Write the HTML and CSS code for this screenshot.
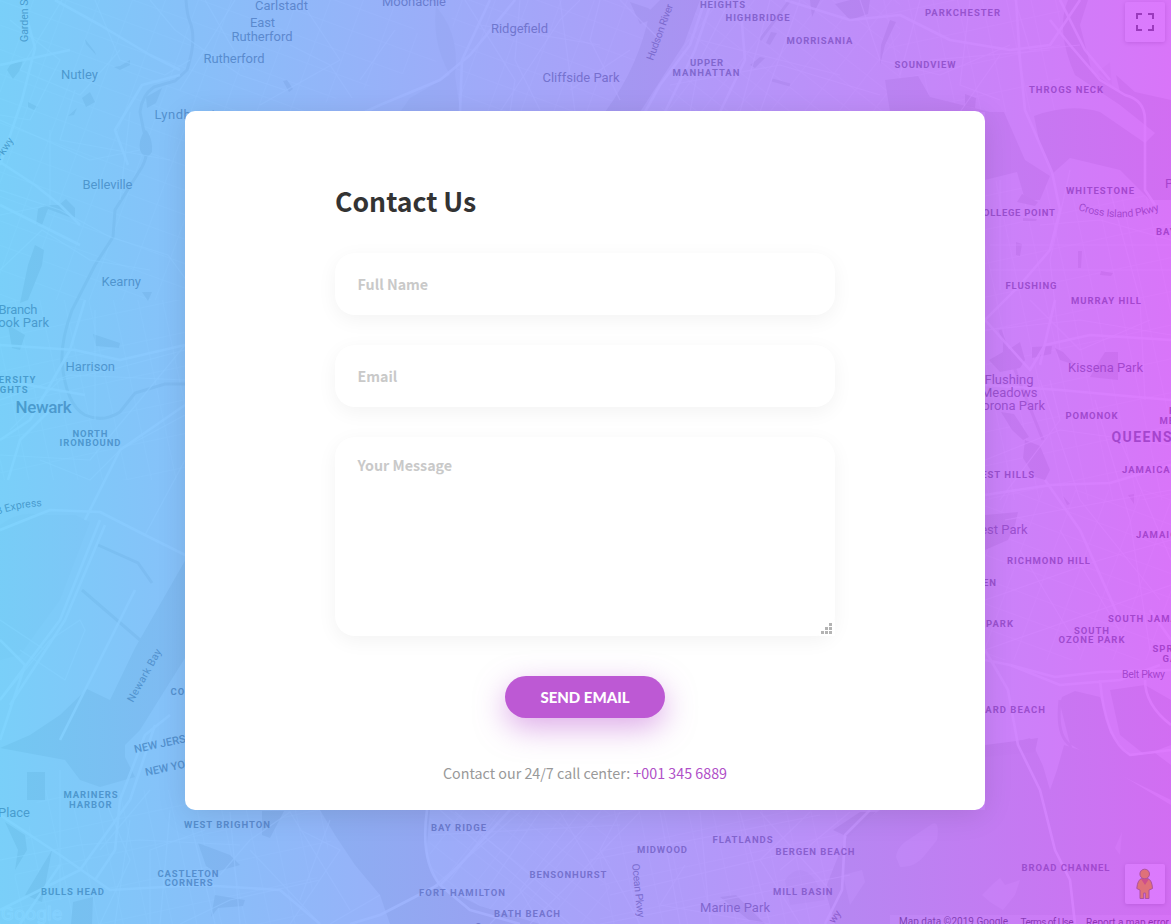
FILE: index.html
```html
<!DOCTYPE html>
<html lang="en">
<head>
<meta charset="utf-8">
<title>Contact Us</title>
<link rel="stylesheet" href="styles.css">
</head>
<body>
<div class="page">
  <svg class="map" viewBox="0 0 1171 924" width="1171" height="924" aria-hidden="true">
    <defs>
      <linearGradient id="tint" x1="0" x2="1" y1="0" y2="0">
        <stop offset="0" stop-color="#49c3ff"/>
        <stop offset=".16" stop-color="#5caeff"/>
        <stop offset="1" stop-color="#d142ff"/>
      </linearGradient>
      <pattern id="gridA" width="31" height="23" patternUnits="userSpaceOnUse" patternTransform="rotate(20)"><path d="M0 .5H31M.5 0V23"/></pattern>
      <pattern id="gridB" width="24" height="33" patternUnits="userSpaceOnUse" patternTransform="rotate(-12)"><path d="M0 .5H24M.5 0V33"/></pattern>
      <pattern id="gridC" width="27" height="19" patternUnits="userSpaceOnUse" patternTransform="rotate(38)"><path d="M0 .5H27M.5 0V19"/></pattern>
      <path id="crossIsland" d="M1078 210Q1122 225 1163 209"/>
      <path id="express" d="M-8 517Q16 507 44 506"/>
    </defs>
    <rect class="land" width="1171" height="924"/>

    <g class="streets">
      <path fill="url(#gridA)" d="M0 0H190V300H0Z"/>
      <path fill="url(#gridB)" d="M0 300H190V480H0Z"/>
      <path fill="url(#gridA)" d="M190 0L390 0 440 60 300 112 190 112Z"/>
      <path fill="url(#gridA)" d="M450 0H670L640 112H460Z"/>
      <path fill="url(#gridC)" d="M700 0H900V112H660Z"/>
      <path fill="url(#gridB)" d="M880 0H1060V112H900Z"/>
      <path fill="url(#gridB)" d="M985 180L1171 190V500H985Z"/>
      <path fill="url(#gridA)" d="M985 490H1171V660H985Z"/>
      <path fill="url(#gridB)" d="M40 790H350L300 924H0Z"/>
      <path fill="url(#gridC)" d="M430 810H610V924H480L430 870Z"/>
      <path fill="url(#gridB)" d="M600 810H840L830 924H600Z"/>
    </g>

    <g class="water">
      <path d="M430 0Q461 30 455 75L460 112H400L410 98 450 75Q430 40 437 0Z" opacity=".5"/>
      <path d="M660 0H700L684 44 640 112H605Q640 65 650 10Z"/>
      <path d="M1088 0L1080 25 1092 72 1120 92 1116 75 1135 92 1171 100V200H1150L1120 170 1070 158 1052 174 1040 145 1034 116Q1070 103 1100 112L1145 143 1155 133 1120 105 1075 75Q1055 30 1068 0Z"/>
      <path d="M885 80L918 76 930 97 990 112H1004L1025 160 1050 176 1040 200H1025L1017 172 985 180V112H890Z"/>
      <path d="M0 525Q20 510 40 515H75L90 522 60 600 20 655 0 660Z" opacity=".3"/>
      <path d="M87 689L110 700 135 648 190 552V650L140 730 125 745V757L135 777 100 787 80 780 65 760 0 748 30 735 60 715Z"/>
      <path d="M985 750L1030 738 1043 766 1050 790 1057 770 1064 745 1080 750 1171 805V924H835L825 890Q840 850 850 830L880 810H985Z"/>
      <path d="M1060 704L1062 697 1075 691 1100 697 1105 713 1110 733 1130 756 1155 753 1171 765V800L1120 775 1070 744Z"/>
      <path d="M1110 690L1145 685 1171 700V745L1145 755 1120 735Z"/>
      <path d="M320 810H430L426 855 438 885 480 906 540 924H390L380 895 355 865 335 835Z"/>
      <path d="M630 2L648 8 658 17 640 24Z"/>
    </g>

    <g class="creek">
      <path d="M186 0Q187 15 190 22Q197 40 187 70L175 81 154 87Q142 95 140 112L144 132Q151 150 142 167L115 210 113 237 95 265 72 310Q61 340 62 362Q66 405 85 415Q103 423 120 412L135 393 165 384H185"/>
      <path d="M760 40L790 0M772 80L790 85M1000 330L1022 388 1043 440"/>
      <path d="M1060 700Q1056 735 1070 745L1080 790"/>
      <path d="M98 545L138 563 152 583M82 590L140 640"/>
    </g>

    <g class="parks">
      <path d="M145 130Q138 140 140 150Q145 162 152 152Q153 140 147 131Z"/>
      <path d="M146 97L162 88 156 103 147 108Z"/>
      <path d="M59 205L66 199 75 208 75 219 48 209 42 225 36 225 38 209 45 205Z"/>
      <path d="M35 245L44 250 42 265 28 300 20 303 28 265Z"/>
      <path d="M10 65L23 60 20 70 13 79 7 70Z"/><path d="M82 98L90 92 95 102 86 107Z"/>
      <path d="M28 102L38 107 34 110 28 107ZM68 116L77 108 74 115ZM114 67L120 66 130 60 130 65 120 70Z"/>
      <path d="M85 39L95 52 96 55 86 44Z"/><path d="M142 292L152 292 148 301Z"/>
      <path d="M93 334L120 343 119 348 96 346Z"/><path d="M8 325L25 335 20 350 12 348Z"/>
      <path d="M283 81L287 80 293 89 289 92Z"/>
      <path d="M27 772H45V800H27Z"/><path d="M52 850L25 895 42 902Z"/><path d="M73 902L93 897 92 924H71Z"/>
      <path d="M198 843L230 855 240 865 215 872 206 866Z"/><path d="M262 811H284L270 838 262 835Z"/>
      <path d="M5 822L25 835 27 850 15 870 18 850Z"/><path d="M215 895L245 900 243 906 218 908 211 917Z"/>
      <path d="M720 897L736 895 765 924 750 921Z"/>
      <path d="M890 20L896 22 885 45 880 65 881 45Z"/><path d="M965 94L976 98 975 108 965 106Z"/>
      <path d="M810 0H820L812 17ZM835 4L850 0H870L868 14 850 20Z"/>
      <path d="M989 360L1003 352 1003 342 1008 350 1020 342 1025 360 1020 368 1000 372Z"/>
      <path d="M1032 347L1052 346 1051 354 1032 358ZM1055 348L1063 352 1075 365 1060 360ZM1100 360L1105 352H1118V380L1090 377Z"/>
      <path d="M1001 412L1014 414 1029 437 1023 440 1012 430Z"/>
      <path d="M1025 440L1040 446 1050 470 1045 480 1035 477 1023 458Z"/>
      <path d="M985 515L1018 512 1015 525 1008 540 985 550Z"/>
      <path d="M1016 242L1022 244 1020 256 1016 255ZM1078 251L1082 251 1081 268H1078ZM1101 271L1113 273 1111 276 1100 275Z"/>
      <path d="M1017 202L1022 194 1038 202 1035 206ZM1023 218L1037 219 1036 221 1023 221Z"/>
      <path d="M1063 496L1070 504 1067 505ZM1128 495L1134 494 1134 504Z"/>
      <path d="M785 880Q800 860 815 880L825 900 790 905Z" opacity=".4"/>
      <path d="M833 830L860 812H876L848 837Z"/>
      <path d="M771 32L766 43 770 45 777 33ZM760 57L750 65 755 68 765 58Z"/>
      <path d="M985 745L1038 738 1035 752 985 757Z"/>
    </g>

    <g class="isles">
      <path d="M896 857Q897 848 905 842L932 824Q940 820 937 840L925 855Q915 868 900 867Z"/>
      <path d="M982 895L993 884 1000 878 1005 885 1020 880 1015 895 1003 910 990 902Z"/>
      <path d="M1115 848L1122 832 1120 855Z"/><path d="M1098 72L1110 62 1112 85Z"/>
      <path d="M843 875L862 870 865 882 850 905Z"/>
    </g>

    <g class="roads minor">
      <path d="M0 120L90 160 140 150M0 190L60 210 110 237 168 255 190 285M50 130V205L0 215M95 0L120 60 165 75 190 60M0 270L42 230 90 260 150 270"/>
      <path d="M62 0L20 70 80 95 120 50M150 0L175 30 240 75 285 90M205 0L245 70M235 0L180 90M300 0L340 60 260 105M290 45L330 65 352 98M360 80L395 30M75 90L60 140 170 160M130 112L120 200"/>
      <path d="M0 455L90 460 140 400 185 345M10 430L60 380 110 370 185 350M95 310V420M0 400L70 375 185 380M40 460L90 480 120 450 185 415M145 535L185 460"/>
      <path d="M0 700L50 640 80 620 85 630 65 680 20 650M0 620L45 650M60 770V900M0 860L80 845 140 840 240 845M105 800L130 860 100 924M190 820L215 924M150 790L100 850"/>
      <path d="M220 875L250 840 290 812 350 910M300 830L340 850 290 924M330 820L300 900M250 850L320 924M380 895L330 924M180 924L230 900 320 880"/>
      <path d="M520 0L515 60 540 110M500 112L560 20 580 0M600 0L590 40 620 100M560 0L575 112M620 0L660 40M465 0L515 80 510 112M630 50L570 90M480 25L600 45"/>
      <path d="M730 0L700 60 690 112M770 0L740 112M800 0L760 112M670 85L780 65 880 95M700 40L840 75M860 0L880 60 940 75 1010 45M920 0L900 75M970 0L960 85 1000 100M1000 55L960 112M930 60L1050 50M1015 0L1030 50 1080 45"/>
      <path d="M990 245H1171M990 270H1171M1000 180V290M1070 170L1050 260 1060 350M1110 190L1140 300 1145 400M1040 225L1100 220 1171 240M985 330L1080 320 1171 335M1030 300L1080 350 1150 320M985 460L1060 430 1171 445M1000 500L1060 420 1050 380M1040 380L1080 500 1160 600M985 600L1100 560 1171 540M1020 550L1080 650M1060 530L1125 640M985 650L1171 585M1095 400L1130 520 1150 650M1005 520L1171 490M1120 440L1171 560"/>
      <path d="M440 810L520 880 570 924M500 812L450 880M540 812L480 900M580 812L520 890 540 924M620 812L600 850 640 924M660 812L680 924M700 812L710 924M740 812L770 924M590 860L820 815M610 895L800 850M600 924L850 875M560 812L600 880M430 835L620 825M760 812L830 890M685 865L660 905 770 924"/>
      <path d="M455 812L560 900M520 812L430 890M600 812L490 924M640 812L530 924M810 812L760 860 800 924M850 812L780 870M10 20L60 60 30 120 0 115M170 810L160 924M205 830L150 850V924M130 820L115 924M230 812L240 924"/>
    </g>
    <g class="roads major">
      <path d="M22 0L35 48 22 100 0 165M55 0L100 25 150 55 180 70M0 65L70 50M0 162L35 185 60 205 80 225M128 165L115 130 142 85 180 75"/>
      <path d="M515 0L470 55 440 80 380 105 365 112M490 0L462 60 460 112"/>
      <path d="M705 0L690 45 660 85 645 112M712 0L695 50 665 112M740 0L745 60 720 112M785 0L850 20 900 15 950 40 1010 50 1050 45 1080 0"/>
      <path d="M1016 0L1020 60 1025 110 1052 172 1060 210 1050 250 1020 285 985 320M1050 20L1070 45 1100 80 1125 95Q1145 100 1145 120V190L1155 205M1060 0L1085 50 1110 80"/>
      <path d="M0 205L80 245M0 530L50 510 100 512 145 535 185 555M100 520L60 620 0 700M105 525L65 620 10 705M185 345L120 360 75 350 0 345M185 405L120 450 85 520M0 640L25 665 0 740M155 725L130 800 80 870 0 910M0 815L60 855 110 890 200 885 280 890 320 924M60 865L20 924M170 715L145 735 120 800 115 850 95 880"/>
      <path d="M427 810Q420 860 440 885L470 910 520 924M438 885L380 915 350 924M440 885L455 870 510 810"/>
      <path d="M870 810L845 835 842 890 825 924"/>
      <path d="M985 320L1030 370 1045 345 1090 335 1171 340M985 385L1060 390 1171 400M1045 480L1080 530 1120 620M985 495L1050 485 1110 483 1171 465M1040 365L1055 300M1150 610L1171 640"/>
      <path d="M985 660L1010 665 1055 677 1100 672 1171 670M985 650L1008 690 1018 745 1040 790 1055 850 1070 880 1075 924M1010 665L1060 685 1120 680 1160 665M1100 680Q1105 740 1130 755L1171 750M1145 680Q1145 705 1171 725"/>
      <path d="M0 440L30 420 70 350 85 300M8 480L20 440 60 400M0 380L85 395M135 590L60 740"/>
    </g>

    <g class="label city">
      <text x="255" y="9.500" textLength="53">Carlstadt</text>
      <text x="250" y="27" textLength="25">East</text>
      <text x="231.500" y="40.500" textLength="61">Rutherford</text>
      <text x="203.500" y="63" textLength="61">Rutherford</text>
      <text x="61" y="79" textLength="37">Nutley</text>
      <text x="154.500" y="118.500" textLength="61">Lyndhurst</text>
      <text x="82.500" y="189" textLength="50">Belleville</text>
      <text x="101.500" y="286" textLength="39.500">Kearny</text>
      <text x="-1.500" y="314" textLength="39">Branch</text>
      <text x="49" y="327" text-anchor="end">Brook Park</text>
      <text x="65.500" y="370.500" textLength="49.500">Harrison</text>
      <text x="382" y="6" textLength="64">Moonachie</text>
      <text x="491" y="33" textLength="57">Ridgefield</text>
      <text x="542.500" y="82" textLength="77">Cliffside Park</text>
      <text x="1068" y="372" textLength="75">Kissena Park</text>
      <text x="984.500" y="383.500" textLength="49">Flushing</text>
      <text x="981" y="396.500" textLength="56.500">Meadows</text>
      <text x="1045" y="409.500" text-anchor="end">Corona Park</text>
      <text x="1027.500" y="533.500" text-anchor="end">Forest Park</text>
      <text x="-2" y="817" textLength="32">Place</text>
      <text x="700" y="912" textLength="70">Marine Park</text>
      <text x="1165" y="188">Port</text>
      <text class="big" x="15.500" y="413" textLength="56">Newark</text>
    </g>
    <g class="label area">
      <text x="700" y="8" textLength="46">HEIGHTS</text>
      <text x="725.500" y="21" textLength="65">HIGHBRIDGE</text>
      <text x="786.500" y="44" textLength="67">MORRISANIA</text>
      <text x="690" y="66" textLength="34">UPPER</text>
      <text x="672.500" y="76" textLength="68">MANHATTAN</text>
      <text x="925" y="16" textLength="76">PARKCHESTER</text>
      <text x="894.500" y="68" textLength="62">SOUNDVIEW</text>
      <text x="1029" y="93" textLength="75">THROGS NECK</text>
      <text x="1066" y="194" textLength="69">WHITESTONE</text>
      <text x="1056" y="216" text-anchor="end" textLength="80">COLLEGE POINT</text>
      <text x="1156" y="235">BAYSIDE</text>
      <text x="1005.500" y="289" textLength="52">FLUSHING</text>
      <text x="1071" y="304" textLength="71">MURRAY HILL</text>
      <text x="1065.500" y="419" textLength="53">POMONOK</text>
      <text x="1169" y="414">F</text>
      <text x="1159.500" y="424">MEADOWS</text>
      <text x="1122" y="473">JAMAICA</text>
      <text x="1035" y="478" text-anchor="end">FOREST HILLS</text>
      <text x="1136" y="538">JAMAICA</text>
      <text x="1007" y="564" textLength="84">RICHMOND HILL</text>
      <text x="997" y="586" text-anchor="end">WOODHAVEN</text>
      <text x="1014" y="627" text-anchor="end">OZONE PARK</text>
      <text x="1108" y="622">SOUTH JAMAICA</text>
      <text x="1074" y="634" textLength="36">SOUTH</text>
      <text x="1058.500" y="643" textLength="67">OZONE PARK</text>
      <text x="1152.500" y="652">SPRINGFIELD</text>
      <text x="1162.500" y="662">GARDENS</text>
      <text x="1046" y="713" text-anchor="end">HOWARD BEACH</text>
      <text x="1021.500" y="871" textLength="89">BROAD CHANNEL</text>
      <text x="36.500" y="383" text-anchor="end">UNIVERSITY</text>
      <text x="28.500" y="393" text-anchor="end">HEIGHTS</text>
      <text x="72.500" y="437" textLength="36">NORTH</text>
      <text x="59.500" y="446" textLength="62">IRONBOUND</text>
      <text x="170.500" y="695">CONSTABLE</text>
      <text x="63.500" y="798" textLength="55">MARINERS</text>
      <text x="69" y="808" textLength="43.500">HARBOR</text>
      <text x="184" y="828" textLength="87">WEST BRIGHTON</text>
      <text x="157.500" y="877" textLength="62">CASTLETON</text>
      <text x="164.500" y="886" textLength="49">CORNERS</text>
      <text x="41" y="895" textLength="64">BULLS HEAD</text>
      <text x="431" y="831" textLength="56">BAY RIDGE</text>
      <text x="529.500" y="878" textLength="78">BENSONHURST</text>
      <text x="419" y="896" textLength="87">FORT HAMILTON</text>
      <text x="494" y="917" textLength="67">BATH BEACH</text>
      <text x="637" y="853" textLength="51">MIDWOOD</text>
      <text x="712.500" y="843" textLength="61">FLATLANDS</text>
      <text x="775.500" y="855" textLength="80">BERGEN BEACH</text>
      <text x="773" y="895" textLength="60.500">MILL BASIN</text>
      <text x="475" y="930">C</text>
      <text class="borough" x="1111.500" y="442">QUEENS</text>
      <text class="state" transform="translate(135 753) rotate(-12)">NEW JERSEY</text>
      <text class="state" transform="translate(146 776) rotate(-12)">NEW YORK</text>
    </g>
    <g class="label way">
      <text transform="translate(27.500 42) rotate(-90)">Garden State</text>
      <text transform="translate(0 161) rotate(-56)">Pkwy</text>
      <text transform="translate(133 703) rotate(-61)" textLength="59">Newark Bay</text>
      <text transform="translate(653 61) rotate(-70)" textLength="59">Hudson River</text>
      <text transform="translate(632 864) rotate(84)" textLength="54">Ocean Pkwy</text>
      <text transform="translate(834 924) rotate(-55)">wy</text>
      <text x="1122" y="678" textLength="43">Belt Pkwy</text>
      <text textLength="83"><textPath href="#crossIsland">Cross Island Pkwy</textPath></text>
      <text><textPath href="#express">78 Express</textPath></text>
    </g>
    <rect x="890" y="915" width="281" height="9" fill="#fff" opacity=".35"/>
    <g class="legal">
      <text x="899" y="925" textLength="109">Map data ©2019 Google</text>
      <text x="1020.500" y="926" textLength="53">Terms of Use</text>
      <text x="1086" y="926" textLength="83">Report a map error</text>
    </g>
    <text class="brand" x="1" y="920" textLength="61">Google</text>
    <g class="control">
      <rect x="1125" y="2" width="40" height="40" rx="2"/>
      <rect x="1125" y="864" width="40" height="40" rx="2"/>
    </g>
    <path d="M1137 19V14H1142M1148 14H1153V19M1153 25V30H1148M1142 30H1137V25" fill="none" stroke="#222" stroke-width="2"/>
    <rect width="1171" height="924" fill="url(#tint)" opacity=".7"/>
    <g class="pegman">
      <path d="M1141.500 878.500Q1137.500 880 1136.800 888.500L1140 890V898.500H1143.700V893H1145.300V898.500H1149V890L1152.500 888.500Q1152 880 1147.800 878.500Z"/>
      <circle cx="1144.700" cy="874" r="4.800"/>
      <path class="collar" d="M1141 879H1149L1145 885Z"/>
    </g>
  </svg>

  <main class="card">
    <form class="form">
      <h1 class="title">Contact Us</h1>
      <input class="field" type="text" placeholder="Full Name" aria-label="Full Name">
      <input class="field" type="email" placeholder="Email" aria-label="Email">
      <div class="message">
        <textarea class="field field-area" placeholder="Your Message" aria-label="Your Message"></textarea>
        <svg class="grip" viewBox="0 0 16 16" width="16" height="16"><path d="M10 3h3v3h-3zM6 7h3v3h-3zM10 7h3v3h-3zM2 11h3v3h-3zM6 11h3v3h-3zM10 11h3v3h-3z"/></svg>
      </div>
      <button class="send" type="button">SEND EMAIL</button>
    </form>
    <p class="phone">Contact our 24/7 call center: <a href="#">+001 345 6889</a></p>
  </main>
</div>
</body>
</html>
```
FILE: styles.css
```css
* { box-sizing: border-box; }
body { margin: 0; overflow: hidden; font-family: "Noto Sans CJK SC", "Noto Sans", sans-serif; }
.page { position: relative; width: 1171px; height: 924px; display: flex; justify-content: center; align-items: flex-start; padding: 111px 1px 0 0; overflow: hidden; }
.map { position: absolute; inset: 0; font-family: Roboto, sans-serif; }

.land { fill: #ebebeb; }
.streets { opacity: .4; }
pattern path { fill: none; stroke: #fff; stroke-width: 1; }
.water { fill: #d3d3d3; }
.creek { fill: none; stroke: #d3d3d3; stroke-width: 3; }
.parks { fill: #cfcfcf; }
.isles { fill: #e2e2e2; }
.roads { fill: none; stroke: #fff; stroke-linejoin: round; }
.minor { stroke-width: 1.2; opacity: .6; }
.major { stroke-width: 2.6; opacity: .8; }

.label { fill: #46465a; }
.city { font-size: 13px; }
.city .big { font-size: 17px; font-weight: 500; }
.area { font-size: 9.5px; font-weight: 700; letter-spacing: 1px; }
.area .borough { font-size: 14px; letter-spacing: 1.4px; }
.area .state { font-size: 11px; font-weight: 500; letter-spacing: 0; }
.way { font-size: 10.5px; }
.legal { fill: #000; font-size: 10px; }
.brand { fill: none; stroke: #fff; stroke-width: 1; font-size: 19px; }
.control { fill: #f8f8f8; filter: drop-shadow(0 1px 2px rgba(0, 0, 0, .3)); }
.pegman { fill: #df7179; stroke: #ad529e; stroke-width: 1; }
.pegman .collar { fill: #cd4f8c; stroke: none; }

.card { position: relative; width: 800px; height: 699px; padding: 70px 150px 0; display: flex; flex-direction: column; background: #fff; border-radius: 10px; box-shadow: 0 5px 30px rgba(0, 0, 0, .1); }
.form { display: flex; flex-direction: column; align-items: stretch; }
.title { margin: 0 0 32px; height: 40px; line-height: 40px; font-size: 26.600px; font-weight: 700; color: #333; }
.field { display: block; width: 100%; height: 62px; margin: 0 0 30px; padding: 0 22.500px 2px; border: 0; border-radius: 20px; background: #fff; box-shadow: 0 5px 20px rgba(0, 0, 0, .05); font-family: inherit; font-size: 14.300px; font-weight: 700; color: #555; outline: 0; }
.field::placeholder { color: #c9c9c9; opacity: 1; }
.message { position: relative; height: 199px; margin-bottom: 40px; }
.field-area { height: 199px; margin: 0; padding-top: 17px; line-height: 21px; resize: none; }
.grip { position: absolute; right: 0; bottom: 0; background: #fff; fill: #b3b3b3; }
.send { align-self: center; width: 160px; height: 42px; padding: 0; border: 0; border-radius: 21px; background: #bd59d4; box-shadow: 0 10px 30px rgba(189, 89, 212, .5); color: #fff; font: 900 15px/42px Lato, sans-serif; }
.phone { margin: 43px 0 0; text-align: center; font-size: 14.300px; line-height: 24px; color: #999; white-space: nowrap; }
.phone a { color: #b04fc8; text-decoration: none; }
```
